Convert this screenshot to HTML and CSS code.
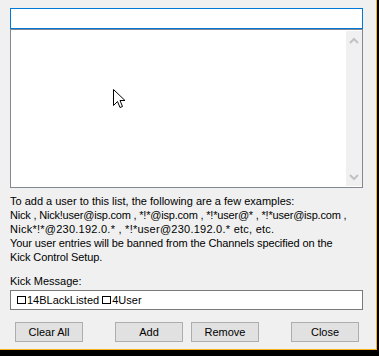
FILE: index.html
```html
<!DOCTYPE html>
<html>
<head>
<meta charset="utf-8">
<link rel="stylesheet" href="styles.css">
</head>
<body>
<div class="window">
  <div class="input"></div>
  <div class="list">
    <div class="list-body"></div>
    <div class="scrollbar">
      <svg class="chev" width="16" height="10" viewBox="0 0 16 10"><path d="M4 7 L8 3 L12 7" fill="none" stroke="#c2c2c2" stroke-width="2"/></svg>
      <svg class="chev" width="16" height="10" viewBox="0 0 16 10"><path d="M4 3 L8 7 L12 3" fill="none" stroke="#c2c2c2" stroke-width="2"/></svg>
    </div>
  </div>
  <div class="help">
    <div>To add a user to this list, the following are a few examples:</div>
    <div class="tight">Nick , Nick!user@isp.com , *!*@isp.com , *!*user@* , *!*user@isp.com ,</div>
    <div class="loose">Nick*!*@230.192.0.* , *!*user@230.192.0.* etc, etc.</div>
    <div class="tight-s">Your user entries will be banned from the Channels specified on the</div>
    <div class="tight-s">Kick Control Setup.</div>
  </div>
  <div class="label">Kick Message:</div>
  <div class="textbox"><span class="ctl"></span>14BLackListed <span class="ctl"></span>4User</div>
  <div class="buttons">
    <div class="btn">Clear All</div>
    <div class="btn btn-add">Add</div>
    <div class="btn btn-remove">Remove</div>
    <div class="btn btn-close">Close</div>
  </div>
  <svg class="cursor" width="13" height="20" viewBox="0 0 13 20"><path d="M0.5 0.5 L0.5 16.5 L4.5 12.5 L7 18.5 L9.5 17.5 L7 11.5 L12 11.5 Z" fill="#fff" stroke="#000" stroke-width="1" stroke-linejoin="miter"/></svg>
</div>
</body>
</html>
```

FILE: styles.css
```css
html, body {
  margin: 0;
  padding: 0;
  background: #000;
}
body {
  width: 379px;
  height: 356px;
  overflow: hidden;
  font-family: "Liberation Sans", Arial, sans-serif;
  font-size: 11px;
  color: #000;
}
.window {
  position: relative;
  box-sizing: border-box;
  width: 377px;
  height: 350px;
  background: #f0f0f0;
  border-right: 1px solid #f5b01e;
  border-bottom: 1px solid #f5b01e;
  padding: 8px 13px 0 10px;
  display: flex;
  flex-direction: column;
}
.input {
  box-sizing: border-box;
  height: 21px;
  border: 1px solid #0078d7;
  background: #fff;
}
.list {
  box-sizing: border-box;
  height: 159px;
  border: 1px solid #828790;
  background: #fff;
  display: flex;
}
.list-body {
  flex: 1;
}
.scrollbar {
  width: 16px;
  margin: 1px 0;
  background: #f0f0f0;
  display: flex;
  flex-direction: column;
  justify-content: space-between;
  padding: 5px 0 4px;
}
.chev {
  display: block;
}
.help {
  margin-top: 6px;
  line-height: 14px;
  white-space: nowrap;
}
.tight { letter-spacing: -0.2px; }
.tight-s { letter-spacing: -0.1px; }
.loose { letter-spacing: 0.25px; }
.label {
  margin-top: 10px;
  line-height: 14px;
}
.textbox {
  box-sizing: border-box;
  margin-top: 2px;
  height: 20px;
  border: 1px solid #7a7a7a;
  background: #fff;
  padding: 0 0 0 6px;
  line-height: 17px;
  display: flex;
  align-items: center;
  white-space: pre;
}
.ctl {
  display: inline-block;
  box-sizing: border-box;
  width: 9px;
  height: 8px;
  border: 1px solid #000;
  margin-right: 1px;
}
.buttons {
  display: flex;
  margin-top: 12px;
  padding-left: 5px;
}
.btn {
  box-sizing: border-box;
  width: 68px;
  height: 20px;
  border: 1px solid #adadad;
  background: #e1e1e1;
  display: flex;
  align-items: center;
  justify-content: center;
}
.btn-add { margin-left: 32px; }
.btn-remove { margin-left: 8px; }
.btn-close { margin-left: 32px; }
.cursor {
  position: absolute;
  left: 113px;
  top: 89px;
}
```
